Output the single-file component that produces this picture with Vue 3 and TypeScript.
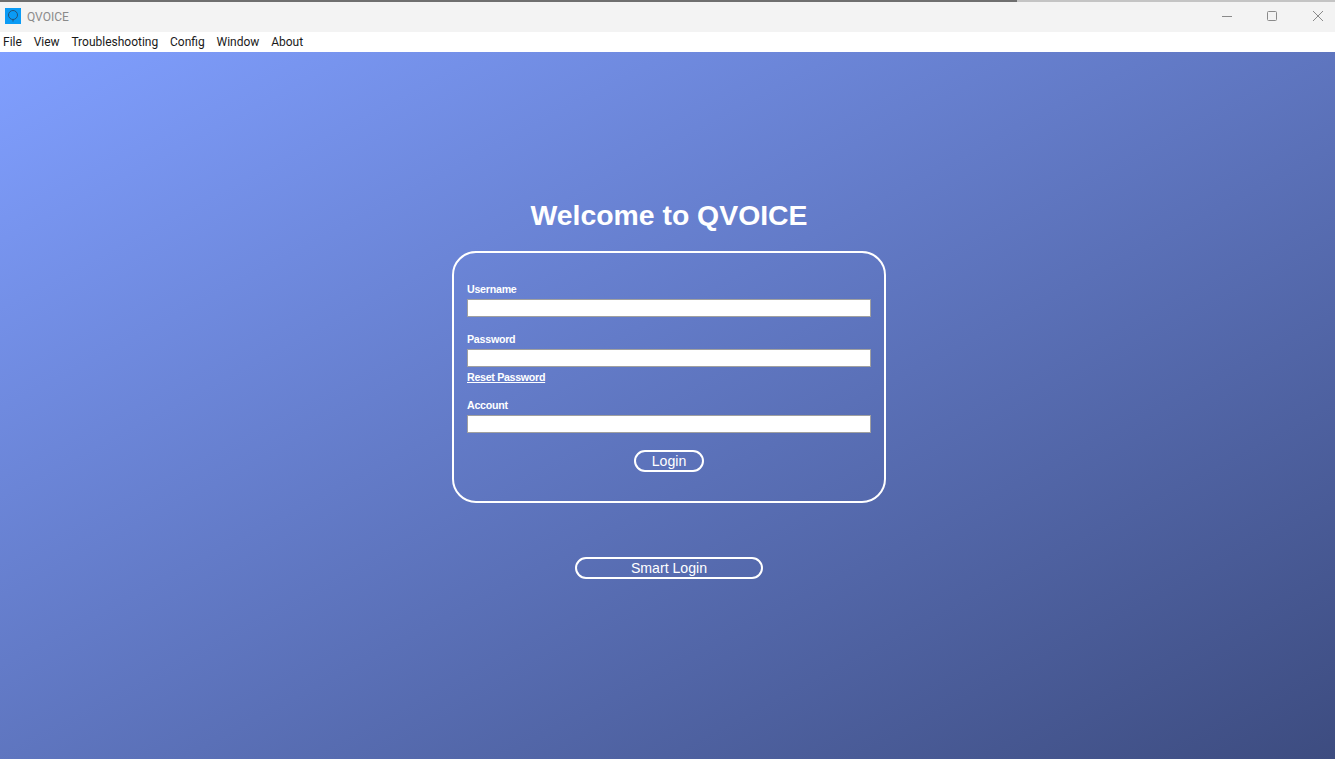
<script setup lang="ts">
const menus: string[] = ['File', 'View', 'Troubleshooting', 'Config', 'Window', 'About']
</script>

<template>
  <div class="app">
    <div class="edge"><div class="edge-dark"></div></div>
    <header class="titlebar">
      <div class="brand">
        <svg class="logo" width="16" height="16" viewBox="0 0 16 16">
          <rect width="16" height="16" fill="#0a9bf5" />
          <circle cx="8" cy="7" r="4.5" fill="none" stroke="#24527a" stroke-width="1" />
          <path d="M8 11.5v2" stroke="#24527a" stroke-width="1" />
        </svg>
        <span class="app-name">QVOICE</span>
      </div>
      <div class="controls">
        <svg width="12" height="12" viewBox="0 0 12 12"><path d="M1 6.5h10" stroke="#8a8a8a" fill="none" /></svg>
        <svg class="max" width="12" height="12" viewBox="0 0 12 12"><rect x="1.5" y="1.5" width="9" height="9" rx="1" stroke="#8a8a8a" fill="none" /></svg>
        <svg width="12" height="12" viewBox="0 0 12 12"><path d="M1 1l10 10M11 1L1 11" stroke="#8a8a8a" fill="none" /></svg>
      </div>
    </header>
    <nav class="menubar">
      <span v-for="m in menus" :key="m" class="menu-item">{{ m }}</span>
    </nav>
    <main class="content">
      <h1 class="title">Welcome to QVOICE</h1>
      <form class="card" @submit.prevent>
        <label class="label" for="user">Username</label>
        <input id="user" class="field" type="text" />
        <label class="label second" for="pass">Password</label>
        <input id="pass" class="field" type="password" />
        <a class="reset" href="#" @click.prevent>Reset Password</a>
        <label class="label third" for="acct">Account</label>
        <input id="acct" class="field" type="text" />
        <button class="btn login" type="submit">Login</button>
      </form>
      <button class="btn smart" type="button">Smart Login</button>
    </main>
  </div>
</template>

<style scoped>
.app {
  width: 1335px;
  height: 759px;
  display: flex;
  flex-direction: column;
  overflow: hidden;
  font-family: "Liberation Sans", Arial, sans-serif;
}
.edge {
  height: 2px;
  background: #c4c4c4;
}
.edge-dark {
  width: 1017px;
  height: 2px;
  background: #6f6f6f;
}
.titlebar {
  box-sizing: border-box;
  height: 30px;
  padding-bottom: 2px;
  background: #f3f3f3;
  display: flex;
  align-items: center;
  justify-content: space-between;
}
.brand {
  display: flex;
  align-items: center;
  gap: 6px;
  padding-left: 5px;
}
.logo {
  display: block;
}
.app-name {
  font-family: "Roboto", sans-serif;
  font-size: 12px;
  padding-top: 2px;
  color: #8a8a8a;
}
.controls {
  display: flex;
  gap: 33px;
  padding-right: 11px;
}
.controls svg {
  display: block;
}
.controls .max {
  margin-right: 1px;
}
.menubar {
  box-sizing: border-box;
  height: 20px;
  padding: 0 0 1px 3px;
  background: #fff;
  display: flex;
  align-items: center;
  gap: 11.8px;
}
.menu-item {
  font-family: "Roboto", sans-serif;
  font-size: 12px;
  color: #1a1a1a;
}
.content {
  flex: 1;
  background: linear-gradient(to bottom right, #809fff, #3d4c80);
  display: flex;
  flex-direction: column;
  align-items: center;
  padding-top: 147px;
  padding-left: 3px;
}
.title {
  margin: 0 0 19px;
  font-size: 28.4px;
  line-height: 33px;
  font-weight: 700;
  color: #fff;
}
.card {
  box-sizing: border-box;
  width: 434px;
  height: 252px;
  border: 2px solid #fff;
  border-radius: 24px;
  padding: 30px 13px 0;
  display: flex;
  flex-direction: column;
  color: #fff;
}
.label {
  font-size: 10.67px;
  line-height: 13px;
  font-weight: 700;
  letter-spacing: -0.25px;
  margin-bottom: 3px;
}
.second {
  margin-top: 16px;
}
.third {
  margin-top: 15px;
}
.field {
  box-sizing: border-box;
  width: 100%;
  height: 18px;
  border: 1px solid #a0a0a0;
  background: #fff;
  padding: 0 2px;
  margin: 0;
  outline: none;
}
.reset {
  font-size: 10.67px;
  line-height: 13px;
  font-weight: 700;
  letter-spacing: -0.3px;
  color: #fff;
  margin-top: 4px;
  align-self: flex-start;
}
.btn {
  box-sizing: border-box;
  height: 22px;
  border: 2px solid #fff;
  border-radius: 11px;
  background: transparent;
  color: #fff;
  font-family: "Liberation Sans", Arial, sans-serif;
  font-size: 14.13px;
  padding: 0;
}
.login {
  width: 70px;
  align-self: center;
  margin-top: 17px;
}
.smart {
  width: 188px;
  margin-top: 54px;
}
</style>
